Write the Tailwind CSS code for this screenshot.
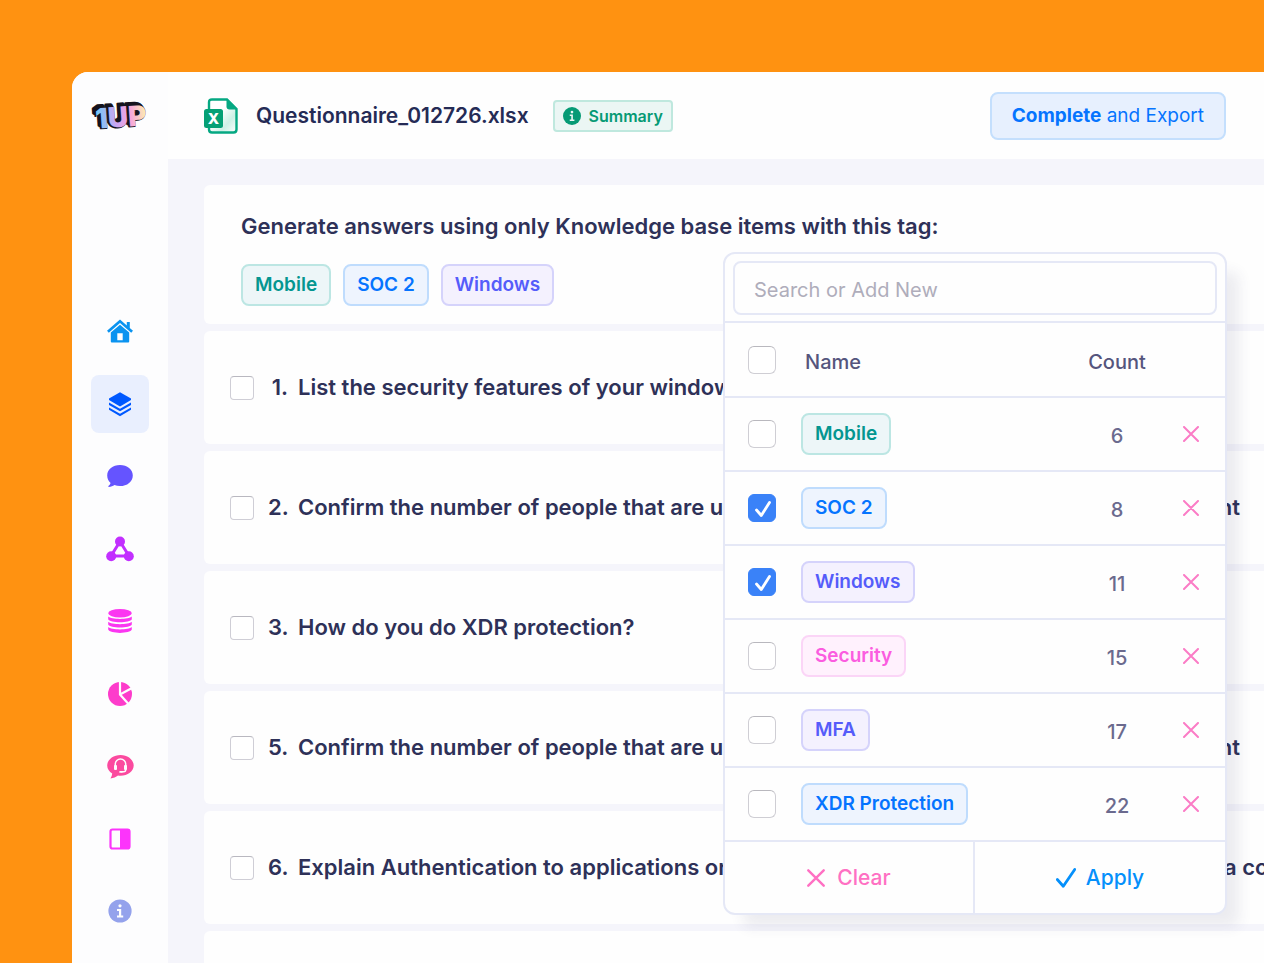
<!DOCTYPE html>
<html lang="en">
  <head>
    <meta charset="UTF-8" />
    <meta name="viewport" content="width=device-width, initial-scale=1.0" />
    <script src="https://cdn.jsdelivr.net/npm/@tailwindcss/browser@4"></script>
    <title>Questionnaire</title>
  </head>
  <body class="bg-[#ff9211] h-screen overflow-hidden pt-18 pl-18 font-['Inter',sans-serif] text-[#2e3158]">
    <div class="flex h-full bg-[#f5f5fb] rounded-tl-2xl overflow-hidden">
      <!-- Sidebar -->
      <aside class="w-24 shrink-0 bg-[#fdfdfe] flex flex-col items-center">
        <a href="#" aria-label="1UP" class="mt-6">
          <svg class="w-[60px] h-9" viewBox="0 0 60 36">
            <defs>
              <linearGradient id="logo" x1="0" x2="1" y1="0" y2="0">
                <stop offset="0" stop-color="#6ecbf5" />
                <stop offset="0.4" stop-color="#c9a5f3" />
                <stop offset="0.68" stop-color="#f5a3dc" />
                <stop offset="1" stop-color="#fdeeb0" />
              </linearGradient>
            </defs>
            <g transform="rotate(-4 30 18)" font-family="Inter, sans-serif" font-weight="900" font-size="28" stroke-linejoin="round">
              <text x="2" y="28" fill="#15131d" stroke="#15131d" stroke-width="2">1UP</text>
              <text x="3" y="29" fill="#15131d" stroke="#15131d" stroke-width="2">1UP</text>
              <text x="4" y="31" fill="#15131d" stroke="#15131d" stroke-width="2">1UP</text>
              <text x="5" y="31" fill="url(#logo)">1UP</text>
            </g>
          </svg>
        </a>
        <nav class="mt-[170px] h-[638px] shrink-0 flex flex-col justify-between">
          <a href="#" aria-label="Home" class="size-[58px] rounded-lg flex items-center justify-center text-[#0a93f0]">
            <svg class="size-7" viewBox="0 0 28 28" fill="currentColor">
              <path d="M14 2.500 1 13.800l1.800 1.900L14 6l11.200 9.700 1.800-1.900-3.200-2.800V5h-3v3.400z" />
              <path fill-rule="evenodd" d="M14 7.800 4.800 15.600V24.500q0 1 1 1h16.400q1 0 1-1V15.600zM11.300 16.200h5.400v7h-5.400z" />
            </svg>
          </a>
          <a href="#" aria-label="Projects" class="size-[58px] rounded-lg flex items-center justify-center bg-[#e9effe] text-[#0059ff]">
            <svg class="size-7" viewBox="0 0 28 28" fill="currentColor">
              <path d="M14 2.200 25 8.400v1.600L14 16.400 3 10V8.400z" />
              <path d="M3 12.400 14 18.800 25 12.400v2.500L14 21.300 3 14.900z" />
              <path d="M3 17.400 14 23.800 25 17.400v2.300L14 26.300 3 19.700z" />
            </svg>
          </a>
          <a href="#" aria-label="Chat" class="size-[58px] rounded-lg flex items-center justify-center text-[#6554ff]">
            <svg class="size-7" viewBox="0 0 28 28" fill="currentColor">
              <path d="M14 3C6.800 3 1.200 7.600 1.200 13.400c0 3 1.300 5.600 3.400 7.500-.4 1.300-1.200 2.300-2.200 3.200-.3.400 0 .8.400.8 2.200 0 4.200-.8 5.600-1.800 1.700.7 3.600 1 5.600 1 7.200 0 12.800-4.700 12.800-10.700S21.200 3 14 3z" />
            </svg>
          </a>
          <a href="#" aria-label="Integrations" class="size-[58px] rounded-lg flex items-center justify-center text-[#c22fff]">
            <svg class="size-7" viewBox="0 0 28 28" fill="currentColor">
              <path d="M14 6.500 5 21h18z" fill="none" stroke="currentColor" stroke-width="3" />
              <circle cx="14" cy="6.500" r="5" />
              <circle cx="5.200" cy="21.200" r="5" />
              <circle cx="22.800" cy="21.200" r="5" />
            </svg>
          </a>
          <a href="#" aria-label="Knowledge base" class="size-[58px] rounded-lg flex items-center justify-center text-[#fb36f1]">
            <svg class="size-7" viewBox="0 0 28 28" fill="currentColor">
              <ellipse cx="14" cy="6.200" rx="11.800" ry="4.200" />
              <path d="M2.200 9.500c3 3.200 20.600 3.200 23.600 0v2.700c-1.500 4-22.100 4-23.600 0z" />
              <path d="M2.200 14.800c3 3.200 20.600 3.200 23.600 0v2.700c-1.500 4-22.100 4-23.600 0z" />
              <path d="M2.200 20.100c3 3.200 20.600 3.200 23.600 0v2.500c-1.500 4.400-22.100 4.400-23.600 0z" />
            </svg>
          </a>
          <a href="#" aria-label="Reports" class="size-[58px] rounded-lg flex items-center justify-center text-[#fd3ccb]">
            <svg class="size-7" viewBox="0 0 28 28">
              <circle cx="14" cy="14" r="12" fill="currentColor" />
              <path d="M14 1v13.500l8.500 9.500M14 14.500 26 8" fill="none" stroke="#fdfdfe" stroke-width="2.200" />
            </svg>
          </a>
          <a href="#" aria-label="Support" class="size-[58px] rounded-lg flex items-center justify-center text-[#fb4a9f]">
            <svg class="size-7" viewBox="0 0 28 28">
              <path d="M14.500 3C7.300 3 1.200 7.600 1.200 13.500c0 3.300 2 6.200 5 8.100-.2 2.200-.9 3.600-1.700 4.800 2.900-.1 5.600-1.500 7.500-2.900.9.100 1.700.2 2.500.2 7.200 0 13.200-4.400 13.200-10.200S21.700 3 14.500 3z" fill="currentColor" />
              <path d="M9.300 14.500v-2.300a5.200 5.200 0 0 1 10.400 0v2.300M19.700 16v1.800q0 2-2 2h-2.500" fill="none" stroke="#fdfdfe" stroke-width="1.500" />
              <rect x="8" y="13" width="3" height="5" rx="1" fill="#fdfdfe" />
              <rect x="18" y="13" width="3" height="5" rx="1" fill="#fdfdfe" />
              <rect x="13.200" y="18.900" width="3.500" height="1.900" rx="0.900" fill="#fdfdfe" />
            </svg>
          </a>
          <a href="#" aria-label="Panels" class="size-[58px] rounded-lg flex items-center justify-center text-[#fc34fb]">
            <svg class="size-7" viewBox="0 0 28 28">
              <rect x="4.500" y="4.500" width="19" height="19" rx="2" fill="none" stroke="currentColor" stroke-width="2.200" />
              <path d="M14 4.500h9.500v19H14z" fill="currentColor" />
            </svg>
          </a>
          <a href="#" aria-label="About" class="size-[58px] rounded-lg flex items-center justify-center text-[#94a2ec]">
            <svg class="size-6" viewBox="0 0 24 24">
              <circle cx="12" cy="12" r="11.600" fill="currentColor" />
              <path d="M9 10h4.200v6.500H15.200v2H9v-2h2v-4.500H9z" fill="#fdfdfe" />
              <circle cx="12" cy="6.800" r="1.600" fill="#fdfdfe" />
            </svg>
          </a>
        </nav>
      </aside>

      <div class="flex-1 min-w-0 flex flex-col">
        <header class="h-[87px] shrink-0 bg-[#fefefe] flex items-center pl-9 pr-[38px]">
          <svg class="w-[34px] h-9" viewBox="0 0 34 36">
            <defs>
              <linearGradient id="sheet" x1="0" x2="1" y1="0" y2="1">
                <stop offset="0.4" stop-color="#ffffff" />
                <stop offset="0.7" stop-color="#cdf1e6" />
                <stop offset="1" stop-color="#ffffff" />
              </linearGradient>
            </defs>
            <path d="M8 1.500h15L32.500 11v20.500q0 3-3 3H8q-3 0-3-3v-27q0-3 3-3z" fill="url(#sheet)" stroke="#05a882" stroke-width="2.400" />
            <path d="M22.500 1v7.500q0 3 3 3H33z" fill="#05a882" />
            <rect x="0" y="11" width="19" height="19" rx="2.500" fill="#05a075" />
            <text x="9.500" y="26" text-anchor="middle" font-family="Inter, sans-serif" font-weight="800" font-size="15" fill="#ffffff">X</text>
          </svg>
          <h1 class="ml-[18px] text-[21px] leading-7 font-semibold text-[#252b55] whitespace-nowrap">Questionnaire_012726.xlsx</h1>
          <button class="ml-6 h-8 px-2 flex items-center gap-2 rounded-sm border-2 border-[#bfe8de] bg-[#ebf6f4] text-[16px] font-semibold text-[#069a75]">
            <svg class="size-[18px]" viewBox="0 0 24 24">
              <circle cx="12" cy="12" r="12" fill="currentColor" />
              <path d="M9 10h4.200v6.500H15.200v2H9v-2h2v-4.500H9z" fill="#ebf6f4" />
              <circle cx="12" cy="6.800" r="1.800" fill="#ebf6f4" />
            </svg>
            Summary
          </button>
          <button class="ml-auto h-12 pt-0.5 px-5 rounded-lg border-2 border-[#c4dffd] bg-[#e7f0fe] text-[19px] text-[#0574ff] whitespace-nowrap"><b class="font-bold">Complete</b> and Export</button>
        </header>

        <main class="relative flex-1 pl-9 pt-[26px]">
          <section class="h-[139px] mb-[7px] bg-[#fefefe] rounded-l-md pl-[37px] pt-[27px]">
            <h2 class="text-[22px] leading-7 font-semibold whitespace-nowrap">Generate answers using only Knowledge base items with this tag:</h2>
            <div id="selected-tags" class="mt-6 flex gap-3"></div>
          </section>
          <ul id="questions" class="flex flex-col gap-[7px]"></ul>

          <!-- Tag picker -->
          <div class="absolute top-[93px] right-[37px] w-[504px] bg-[#fefefe] border-2 border-[#e5e8f6] rounded-xl shadow-[16px_16px_14px_-4px_rgba(60,60,100,0.09)] overflow-hidden">
            <div class="px-2 pt-[7px] pb-1.5 border-b-2 border-[#e5e8f6]">
              <input type="text" aria-label="Search or add a tag" placeholder="Search or Add New" class="block w-full h-[54px] pt-1 rounded-lg border-2 border-[#e5e8f6] bg-transparent px-[19px] text-[20px] placeholder:text-[#afadbb] outline-none" />
            </div>
            <table class="w-full table-fixed border-collapse text-[20px] text-[#55557d]">
              <thead>
                <tr class="h-[74px] border-b-2 border-[#e5e8f6]">
                  <th class="w-[76px] pl-[23px] text-left">
                    <input type="checkbox" aria-label="Select all tags" class="block appearance-none size-7 rounded-md border border-[#cfced4] border-t-[#b9b8be] bg-white" />
                  </th>
                  <th class="pl-1 pt-1 text-left font-medium">Name</th>
                  <th class="w-[84px] pt-1 font-medium">Count</th>
                  <th class="w-[66px]"></th>
                </tr>
              </thead>
              <tbody id="tags"></tbody>
            </table>
            <div class="grid grid-cols-2 h-[71px] text-[21px] font-medium">
              <button class="flex items-center justify-center gap-3 border-r-2 border-[#e5e8f6] text-[#ff70c3]">
                <svg class="size-[18px]" viewBox="0 0 18 18" fill="none" stroke="currentColor" stroke-width="2.400" stroke-linecap="round"><path d="m1.300 1.300 15.400 15.400M16.700 1.300 1.300 16.700" /></svg>
                Clear
              </button>
              <button class="flex items-center justify-center gap-2.5 text-[#0590fb]">
                <svg class="size-5" viewBox="0 0 20 20" fill="none" stroke="currentColor" stroke-width="2.800" stroke-linecap="round" stroke-linejoin="round"><path d="m1.300 11.500 6 6.800L18.700 1.500" /></svg>
                Apply
              </button>
            </div>
          </div>
        </main>
      </div>
    </div>

    <script>
      const tagColors = {
        teal: "border-[#bce6e3] bg-[#edf6f8] text-[#049690]",
        blue: "border-[#bfdcfd] bg-[#eef4fe] text-[#0574ff]",
        violet: "border-[#d5d3fb] bg-[#f4f1fe] text-[#555cfa]",
        pink: "border-[#fbd5f7] bg-[#fff1fd] text-[#fb5ce0]",
      };

      const tags = [
        { name: "Mobile", count: 6, color: "teal" },
        { name: "SOC 2", count: 8, color: "blue", checked: true },
        { name: "Windows", count: 11, color: "violet", checked: true },
        { name: "Security", count: 15, color: "pink" },
        { name: "MFA", count: 17, color: "violet" },
        { name: "XDR Protection", count: 22, color: "blue" },
      ];

      const questions = [
        { no: "1.", text: "List the security features of your windows" },
        { no: "2.", text: "Confirm the number of people that are using", end: "the environment" },
        { no: "3.", text: "How do you do XDR protection?" },
        { no: "5.", text: "Confirm the number of people that are using", end: "the environment" },
        { no: "6.", text: "Explain Authentication to applications or", more: "a company" },
        { no: "", text: "" },
      ];

      function tagChip(tag) {
        return `<span class="inline-flex items-center h-[42px] px-3 rounded-lg border-2 text-[19px] font-semibold whitespace-nowrap ${tagColors[tag.color]}">${tag.name}</span>`;
      }

      document.getElementById("selected-tags").innerHTML = tags
        .slice(0, 3)
        .map(tagChip)
        .join("");

      document.getElementById("questions").innerHTML = questions
        .map(
          (q) => `
          <li class="h-[113px] bg-[#fefefe] rounded-l-md pl-[26px]">
            <label class="h-full flex items-center text-[22px] font-semibold whitespace-nowrap">
              <input type="checkbox" class="appearance-none size-6 shrink-0 mr-[14px] rounded-sm border border-[#cfced6] border-t-[#b9b8c0] bg-white" />
              <span class="w-5 shrink-0 mr-[10px] text-right">${q.no}</span>
              <span>${q.text}</span>
              ${q.end ? `<span class="ml-auto mr-6">${q.end}</span>` : ""}
              ${q.more ? `<span class="ml-auto w-10 overflow-hidden">${q.more}</span>` : ""}
            </label>
          </li>`
        )
        .join("");

      document.getElementById("tags").innerHTML = tags
        .map(
          (tag) => `
          <tr class="h-[74px] border-b-2 border-[#e5e8f6]">
            <td class="pl-[23px]">
              <span class="relative block size-7">
                <input type="checkbox" aria-label="${tag.name}" ${tag.checked ? "checked" : ""} class="peer block appearance-none size-7 rounded-md border border-[#cfced4] border-t-[#b9b8be] bg-white checked:border-[#3a82f8] checked:bg-[#3a82f8]" />
                <svg class="absolute inset-0 size-7 hidden peer-checked:block pointer-events-none" viewBox="0 0 28 28" fill="none" stroke="#fff" stroke-width="2.800" stroke-linecap="round" stroke-linejoin="round"><path d="m8.500 16 4.800 5.500L21.500 8.500" /></svg>
              </span>
            </td>
            <td>${tagChip(tag)}</td>
            <td class="pt-1 text-center text-[#6b6a8e] font-medium">${tag.count}</td>
            <td>
              <button aria-label="Delete ${tag.name}" class="block ml-6 text-[#fb7cc6]">
                <svg class="size-4" viewBox="0 0 16 16" fill="none" stroke="currentColor" stroke-width="2" stroke-linecap="round"><path d="m1 1 14 14M15 1 1 15" /></svg>
              </button>
            </td>
          </tr>`
        )
        .join("");
    </script>
  </body>
</html>
